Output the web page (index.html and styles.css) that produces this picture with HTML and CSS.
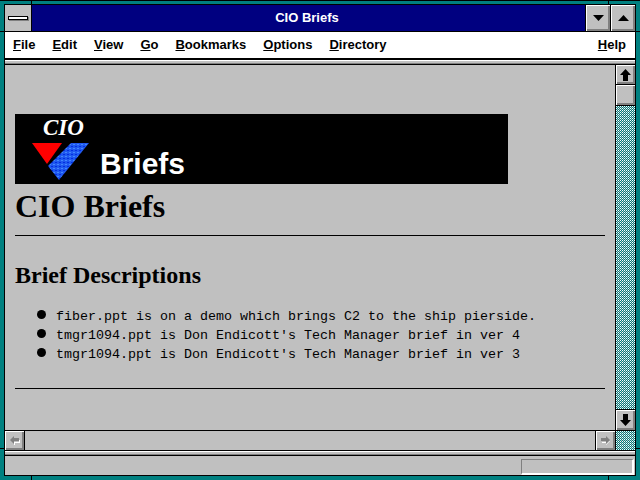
FILE: index.html
```html
<!DOCTYPE html>
<html lang="en">
<head>
  <meta charset="UTF-8" />
  <title>CIO Briefs</title>
  <link rel="stylesheet" href="styles.css">
</head>
<body>

  <div class="window">
    <span class="tick tick-top-left"></span>
    <span class="tick tick-top-right"></span>
    <span class="tick tick-bottom-left"></span>
    <span class="tick tick-bottom-right"></span>
    <span class="tick tick-left-top"></span>
    <span class="tick tick-left-bottom"></span>
    <span class="tick tick-right-top"></span>
    <span class="tick tick-right-bottom"></span>

    <svg class="defs" width="0" height="0">
      <defs>
        <pattern id="dither" width="2" height="2" patternUnits="userSpaceOnUse">
          <rect width="2" height="2" fill="#008080" />
          <rect width="1" height="1" fill="#fff" />
          <rect x="1" y="1" width="1" height="1" fill="#c0c0c0" />
        </pattern>
        <pattern id="blue" width="4" height="4" patternUnits="userSpaceOnUse">
          <rect width="4" height="4" fill="#2058f0" />
          <rect width="2" height="1" fill="#0030e0" />
          <rect x="2" y="2" width="2" height="1" fill="#4088ff" />
        </pattern>
      </defs>
    </svg>

    <div class="window-inner">
      <header class="titlebar">
        <div class="sysmenu"><span class="sysmenu-bar"></span></div>
        <div class="title">CIO Briefs</div>
        <div class="winbtn">
          <svg width="11" height="6" viewBox="0 0 11 6"><path d="M0 0h11L5.500 6z" /></svg>
        </div>
        <div class="winbtn">
          <svg width="11" height="6" viewBox="0 0 11 6"><path d="M0 6h11L5.500 0z" /></svg>
        </div>
      </header>

      <nav class="menubar">
        <span><u>F</u>ile</span>
        <span><u>E</u>dit</span>
        <span><u>V</u>iew</span>
        <span><u>G</u>o</span>
        <span><u>B</u>ookmarks</span>
        <span><u>O</u>ptions</span>
        <span><u>D</u>irectory</span>
        <span class="menu-help"><u>H</u>elp</span>
      </nav>

      <div class="toolstrip"></div>

      <div class="viewport">
        <main class="content">
          <svg class="logo" width="493" height="70" viewBox="0 0 493 70">
            <rect width="493" height="70" fill="#000" />
            <text x="28" y="21" class="logo-cio">CIO</text>
            <polygon points="17,29 47,29 32,50" fill="#ff0000" />
            <polygon points="56,29 74,29 44,66 33,52" fill="url(#blue)" />
            <text x="85" y="60" class="logo-briefs">Briefs</text>
          </svg>
          <h1>CIO Briefs</h1>
          <hr>
          <h2>Brief Descriptions</h2>
          <ul>
            <li>fiber.ppt is on a demo which brings C2 to the ship pierside.</li>
            <li>tmgr1094.ppt is Don Endicott's Tech Manager brief in ver 4</li>
            <li>tmgr1094.ppt is Don Endicott's Tech Manager brief in ver 3</li>
          </ul>
          <hr>
        </main>

        <div class="vscroll">
          <div class="sbtn">
            <svg width="11" height="12" viewBox="0 0 11 12"><path d="M5.500 0L11 6H8v6H3V6H0z" /></svg>
          </div>
          <div class="sbtn thumb"></div>
          <svg class="track"><rect width="100%" height="100%" fill="url(#dither)" /></svg>
          <div class="sbtn sbtn-down">
            <svg width="11" height="12" viewBox="0 0 11 12"><path d="M5.500 12L11 6H8V0H3v6H0z" /></svg>
          </div>
        </div>
      </div>

      <div class="hscroll">
        <div class="sbtn hbtn">
          <svg width="10" height="9" viewBox="0 0 10 9">
            <path class="lit" d="M5 9V7h5V4H9v2H4v3z" />
            <path class="off" d="M0 4L4 0v2h5v3H4v3z" />
          </svg>
        </div>
        <div class="hspace"></div>
        <div class="sbtn hbtn hbtn-right">
          <svg width="10" height="9" viewBox="0 0 10 9">
            <path class="lit" d="M1 7h4v2l4-4H8L5 8V6H1z" />
            <path class="off" d="M9 4L5 0v2H0v3h5v3z" />
          </svg>
        </div>
        <svg class="corner"><rect width="100%" height="100%" fill="url(#dither)" /></svg>
      </div>

      <div class="statusgap"></div>
      <footer class="statusbar">
        <div class="progress"></div>
      </footer>
    </div>
  </div>

</body>
</html>
```

FILE: styles.css
```css
html, body {
  margin: 0;
  padding: 0;
}

body {
  width: 640px;
  height: 480px;
  overflow: hidden;
  font-family: 'Liberation Sans', Arial, sans-serif;
}

.window {
  position: relative;
  box-sizing: border-box;
  width: 640px;
  height: 480px;
  padding: 4px 4px 4px 4px;
  background: #008080;
  box-shadow: inset 0 1px 0 #000;
}

.defs {
  position: absolute;
}

.window-inner {
  box-sizing: border-box;
  height: 100%;
  display: flex;
  flex-direction: column;
  background: #c0c0c0;
  border: 1px solid #000;
}

.tick {
  position: absolute;
  background: #000;
}
.tick-top-left { left: 31px; top: 0; width: 1px; height: 4px; }
.tick-top-right { left: 608px; top: 0; width: 1px; height: 4px; }
.tick-bottom-left { left: 31px; bottom: 0; width: 1px; height: 4px; }
.tick-bottom-right { left: 608px; bottom: 0; width: 1px; height: 4px; }
.tick-left-top { left: 0; top: 31px; width: 4px; height: 1px; }
.tick-left-bottom { left: 0; top: 448px; width: 4px; height: 1px; }
.tick-right-top { right: 0; top: 31px; width: 4px; height: 1px; }
.tick-right-bottom { right: 0; top: 448px; width: 4px; height: 1px; }

.titlebar {
  flex: 0 0 auto;
  display: flex;
  height: 26px;
  background: #000080;
  border-bottom: 1px solid #000;
}

.sysmenu {
  width: 26px;
  background: #c0c0c0;
  border-right: 1px solid #000;
  display: flex;
  align-items: center;
  justify-content: center;
}

.sysmenu-bar {
  width: 18px;
  height: 2px;
  background: #fff;
  border: 1px solid #000;
  box-shadow: 1px 1px 0 #808080;
}

.title {
  flex: 1;
  padding-right: 3px;
  color: #fff;
  font-weight: bold;
  font-size: 13px;
  line-height: 26px;
  text-align: center;
}

.winbtn {
  box-sizing: border-box;
  width: 25px;
  background: #c0c0c0;
  border-left: 1px solid #000;
  box-shadow: inset 1px 1px 0 #fff, inset -2px -2px 0 #808080;
  display: flex;
  align-items: center;
  justify-content: center;
}

.menubar {
  flex: 0 0 auto;
  display: flex;
  gap: 17px;
  height: 26px;
  padding: 0 9px 0 8px;
  background: #fff;
  border-bottom: 2px solid #000;
  color: #000;
  font-weight: bold;
  font-size: 13px;
  line-height: 26px;
}

.menu-help {
  margin-left: auto;
}

.toolstrip {
  flex: 0 0 auto;
  height: 3px;
  background: #c0c0c0;
  border-top: 1px solid #fff;
  border-bottom: 1px solid #000;
  box-shadow: inset 0 -1px 0 #808080;
}

.viewport {
  flex: 1;
  min-height: 0;
  display: flex;
  border-bottom: 1px solid #000;
}

.content {
  flex: 1;
  min-width: 0;
  padding: 49px 10px 0 10px;
  color: #000;
}

.logo {
  display: block;
}

.logo-cio {
  font-family: 'Liberation Serif', serif;
  font-style: italic;
  font-weight: bold;
  font-size: 23px;
  fill: #fff;
}

.logo-briefs {
  font-family: 'Liberation Sans', sans-serif;
  font-weight: bold;
  font-size: 30px;
  fill: #fff;
}

h1 {
  margin: 4px 0 0;
  font-family: 'Liberation Serif', serif;
  font-size: 32px;
  line-height: 37px;
}

hr {
  height: 1px;
  margin: 0;
  border: 0;
  background: #000;
}

h1 + hr {
  margin-top: 10px;
}

h2 {
  margin: 25px 0 0;
  font-family: 'Liberation Serif', serif;
  font-size: 24px;
  line-height: 28px;
}

ul {
  margin: 18px 0 0;
  padding: 0 0 0 22px;
  list-style: none;
  font-family: 'Liberation Mono', monospace;
  font-size: 13.33px;
  line-height: 19px;
}

li {
  display: flex;
  align-items: flex-start;
  gap: 10px;
}

li::before {
  content: '';
  width: 9px;
  height: 9px;
  margin-top: 3px;
  border-radius: 50%;
  background: #000;
}

ul + hr {
  margin-top: 24px;
}

.vscroll {
  width: 19px;
  display: flex;
  flex-direction: column;
  border-left: 1px solid #000;
}

.sbtn {
  box-sizing: border-box;
  flex: 0 0 auto;
  height: 20px;
  background: #c0c0c0;
  border-bottom: 1px solid #000;
  box-shadow: inset 1px 1px 0 #fff, inset -2px -2px 0 #808080;
  display: flex;
  align-items: center;
  justify-content: center;
}

.thumb {
  height: 21px;
}

.sbtn-down {
  border-top: 1px solid #000;
  border-bottom: 0;
  height: 21px;
}

.track {
  display: block;
  flex: 1;
  min-height: 0;
  width: 19px;
  shape-rendering: crispEdges;
}

.hscroll {
  flex: 0 0 auto;
  display: flex;
  height: 19px;
  border-bottom: 1px solid #000;
}

.hbtn {
  width: 20px;
  height: 19px;
  border-bottom: 0;
  border-right: 1px solid #000;
}

.hspace {
  flex: 1;
}

.hbtn-right {
  width: 21px;
  border-left: 1px solid #000;
}

.corner {
  display: block;
  width: 19px;
  height: 19px;
  shape-rendering: crispEdges;
}

.off {
  fill: #808080;
}

.lit {
  fill: #fff;
}

.statusgap {
  flex: 0 0 auto;
  height: 3px;
  border-top: 1px solid #fff;
  border-bottom: 1px solid #000;
  box-shadow: inset 0 -1px 0 #808080;
}

.statusbar {
  flex: 0 0 19px;
  display: flex;
  justify-content: flex-end;
  padding: 3px 1px 0 0;
  box-sizing: border-box;
}

.progress {
  width: 110px;
  border-top: 1px solid #808080;
  border-left: 1px solid #808080;
  border-right: 2px solid #fff;
  border-bottom: 2px solid #fff;
}
```
